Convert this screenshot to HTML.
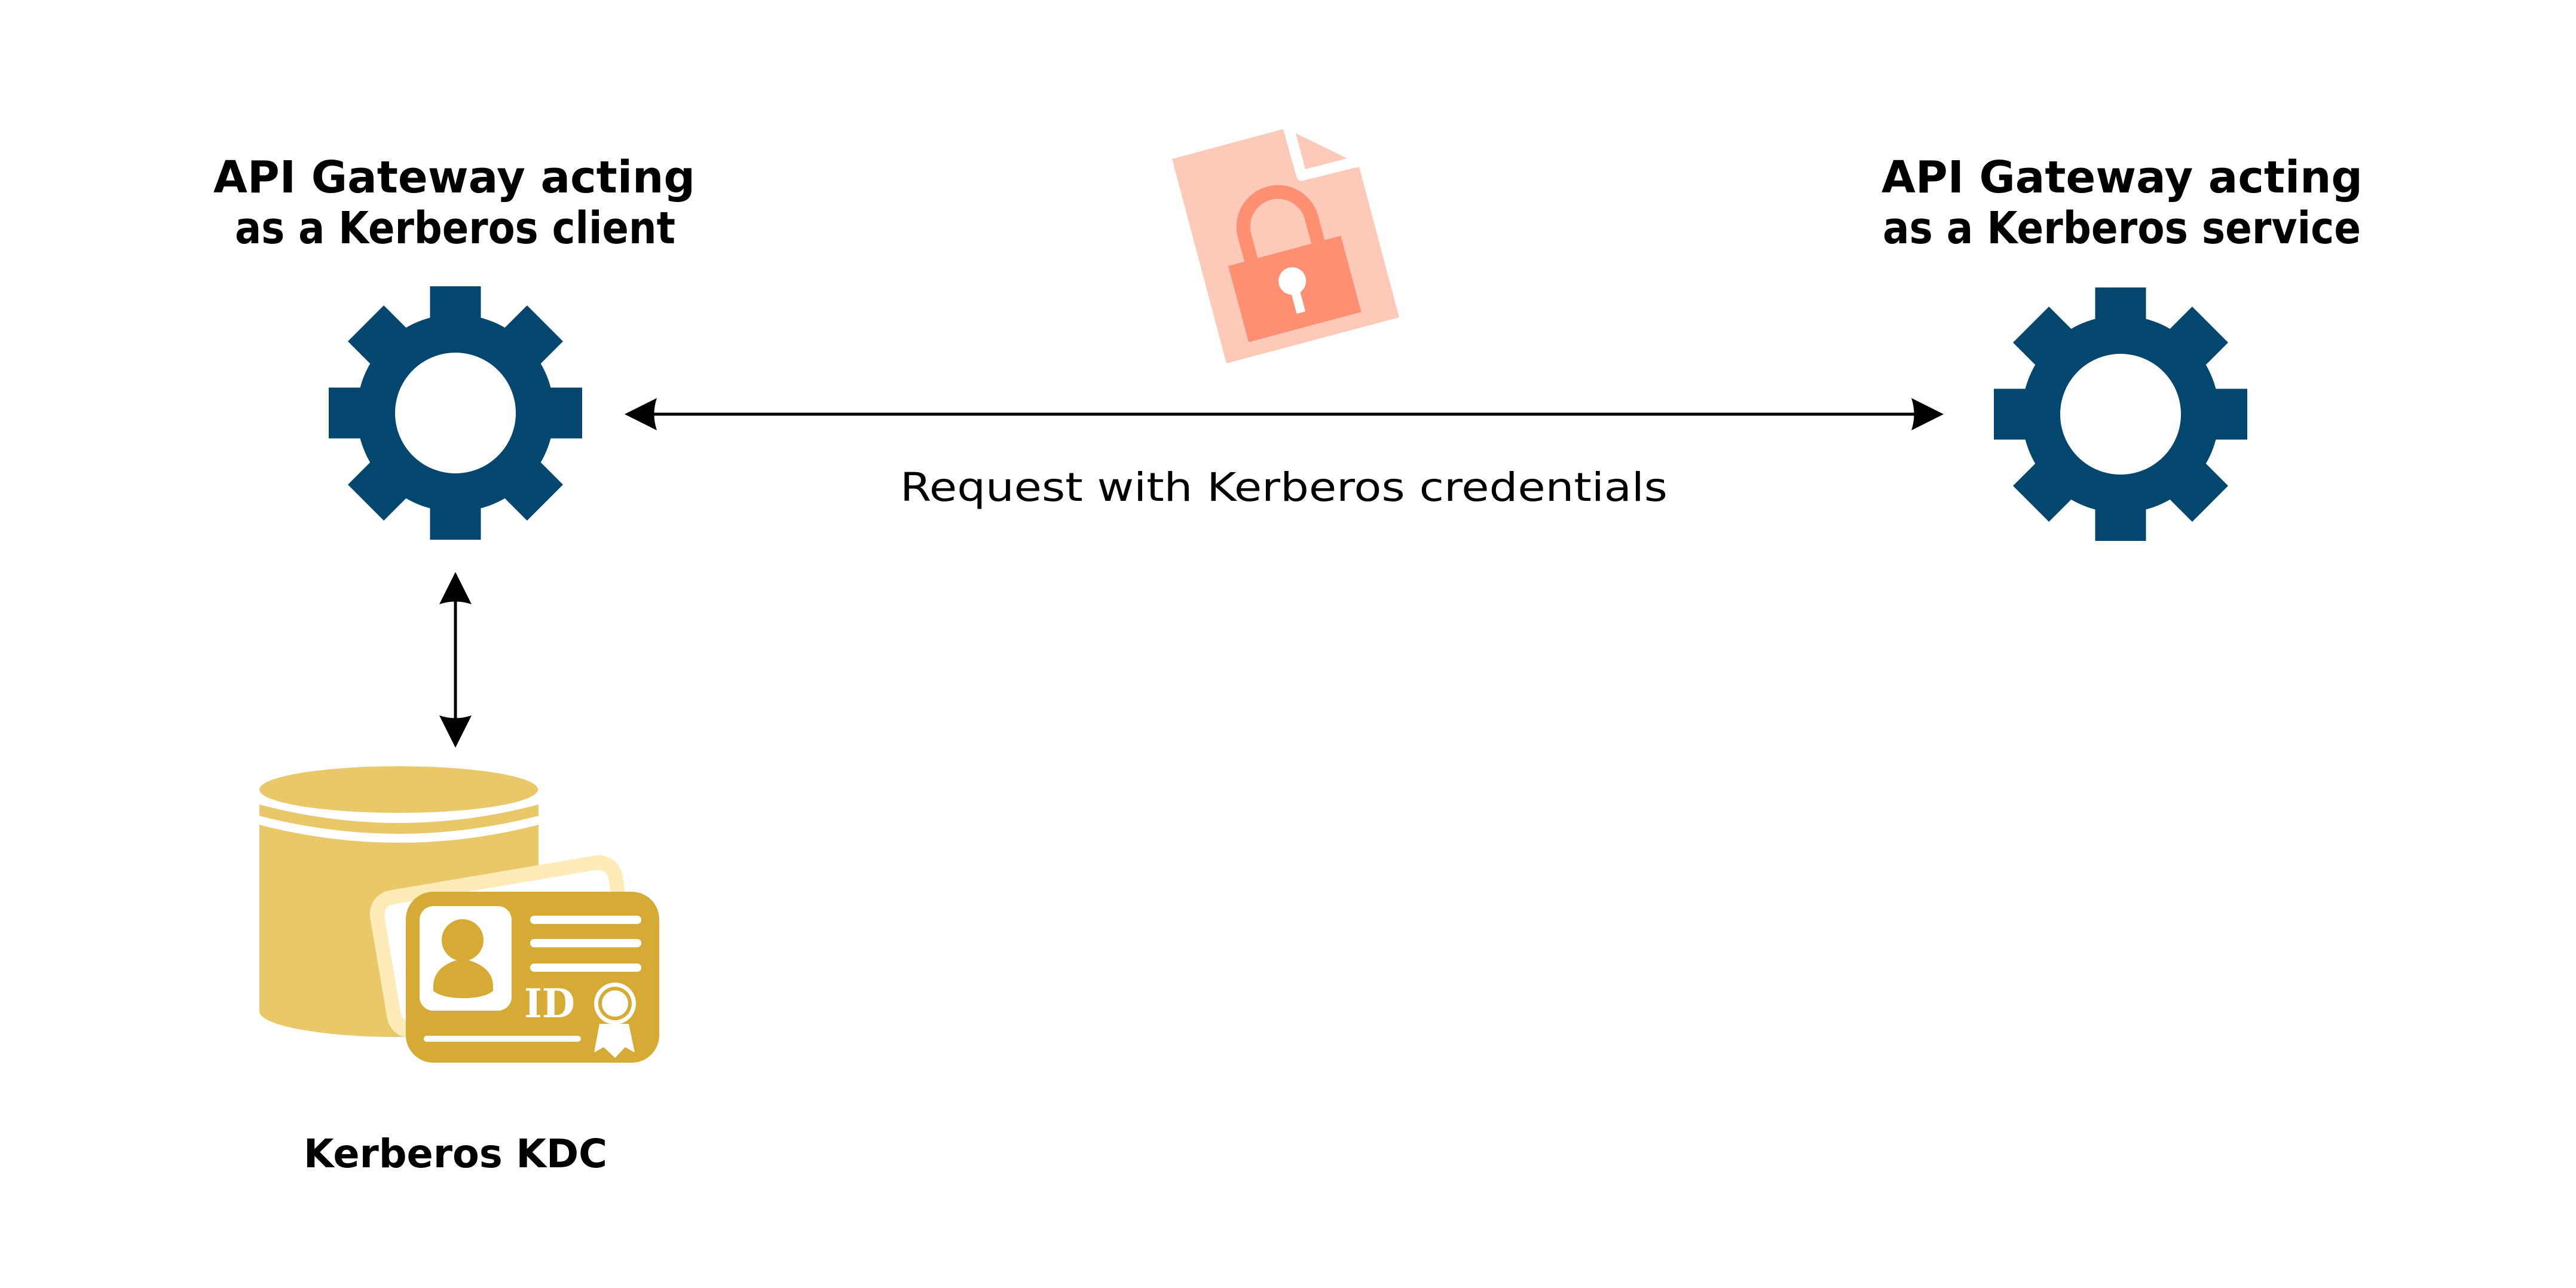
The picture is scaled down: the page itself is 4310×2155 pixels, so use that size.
<!DOCTYPE html>
<html><head><meta charset="utf-8"><style>
html,body{margin:0;padding:0;background:#fff;}
svg{display:block;}
</style></head><body>
<svg width="4310" height="2155" viewBox="0 0 4310 2155" xmlns="http://www.w3.org/2000/svg">
<defs>
<g id="gear">
  <circle r="165" fill="#03466E"/>
  <rect x="-212" y="-42.5" width="424" height="85" fill="#03466E"/>
  <rect x="-212" y="-42.5" width="424" height="85" fill="#03466E" transform="rotate(45)"/>
  <rect x="-212" y="-42.5" width="424" height="85" fill="#03466E" transform="rotate(90)"/>
  <rect x="-212" y="-42.5" width="424" height="85" fill="#03466E" transform="rotate(135)"/>
  <circle r="101" fill="#fff"/>
</g>
</defs>
<rect width="4310" height="2155" fill="#fff"/>

<g font-family="'DejaVu Sans','Liberation Sans',sans-serif" font-weight="bold" font-size="74" fill="#000">
  <text x="357" y="322" textLength="806" lengthAdjust="spacingAndGlyphs">API Gateway acting</text>
  <text x="393" y="407" textLength="737" lengthAdjust="spacingAndGlyphs">as a Kerberos client</text>
  <text x="3148" y="322" textLength="805" lengthAdjust="spacingAndGlyphs">API Gateway acting</text>
  <text x="3150" y="407" textLength="800" lengthAdjust="spacingAndGlyphs">as a Kerberos service</text>
  <text x="508" y="1953" font-size="66" textLength="508" lengthAdjust="spacingAndGlyphs">Kerberos KDC</text>
</g>
<text x="1506" y="838" font-family="'DejaVu Sans','Liberation Sans',sans-serif" font-size="66" fill="#000" textLength="1284" lengthAdjust="spacingAndGlyphs">Request with Kerberos credentials</text>

<use href="#gear" x="762" y="691"/>
<use href="#gear" x="3548" y="693"/>

<!-- horizontal arrow -->
<line x1="1090" y1="693" x2="3207" y2="693" stroke="#000" stroke-width="5"/>
<path d="M1045 693 L1099 666 Q1090 693 1099 720 Z" fill="#000"/>
<path d="M3252 693 L3198 666 Q3207 693 3198 720 Z" fill="#000"/>
<!-- vertical arrow -->
<line x1="762" y1="1000" x2="762" y2="1208" stroke="#000" stroke-width="5"/>
<path d="M762 957 L735 1011 Q762 1002 789 1011 Z" fill="#000"/>
<path d="M762 1251 L735 1197 Q762 1206 789 1197 Z" fill="#000"/>

<!-- lock document -->
<path d="M1961 266 L2147 216 L2169 295 Q2172 305 2181 302 L2274 279 L2341 531 L2052 608 Z" fill="#FDC9B9"/>
<path d="M2168 223 L2254 265 L2184 283 Z" fill="#FDC9B9"/>
<g transform="translate(2055 445) rotate(-15)">
  <path d="M28 8 L28 -42 A69.5 69.5 0 0 1 167 -42 L167 8 L144 8 L144 -42 A46.5 46.5 0 0 0 51 -42 L51 8 Z" fill="#FF8F73"/>
  <rect x="0" y="0" width="195" height="132" fill="#FF8F73"/>
  <circle cx="97" cy="52" r="23" fill="#fff"/>
  <rect x="90" y="58" width="15" height="49" fill="#fff"/>
</g>

<!-- database -->
<path d="M434 1380 Q667 1440 901 1380 L901 1692 A233 43 0 0 1 434 1692 Z" fill="#E9C869"/>
<path d="M434 1346 Q667 1408 901 1346 L901 1365 Q667 1425 434 1365 Z" fill="#E9C869"/>
<ellipse cx="667" cy="1321" rx="233" ry="39" fill="#E9C869"/>

<!-- back card -->
<g transform="translate(616 1516) rotate(-9.6)">
  <rect x="0" y="-20" width="428" height="250" rx="40" fill="#FDEBB8"/>
  <rect x="24" y="4" width="380" height="200" rx="18" fill="#fff"/>
</g>
<!-- front card -->
<rect x="679" y="1492" width="424" height="286" rx="46" fill="#D6AB35"/>
<rect x="702" y="1516" width="154" height="175" rx="23" fill="#fff"/>
<circle cx="774" cy="1573" r="35" fill="#D6AB35"/>
<path d="M762 1607 L786 1607 Q825 1620 825 1650 L825 1658 Q810 1670 775 1670 Q740 1670 725 1658 L725 1650 Q725 1620 762 1607 Z" fill="#D6AB35"/>
<g stroke="#fff" stroke-linecap="round" stroke-width="14">
  <line x1="894" y1="1539" x2="1066" y2="1539"/>
  <line x1="894" y1="1578" x2="1066" y2="1578"/>
  <line x1="894" y1="1619" x2="1066" y2="1619"/>
</g>
<line x1="714" y1="1738" x2="967" y2="1738" stroke="#fff" stroke-width="10" stroke-linecap="round"/>
<text x="877" y="1702" font-family="'DejaVu Serif','Liberation Serif',serif" font-weight="bold" font-size="66" fill="#fff" textLength="85" lengthAdjust="spacingAndGlyphs">ID</text>
<path d="M1003 1713 L994 1761 L1010 1752 L1029 1770 L1046 1752 L1062 1761 L1052 1713 Z" fill="#fff"/>
<circle cx="1029" cy="1679" r="35" fill="#fff"/>
<circle cx="1029" cy="1679" r="28" fill="#D6AB35"/>
<circle cx="1029" cy="1679" r="22" fill="#fff"/>
</svg>
</body></html>
